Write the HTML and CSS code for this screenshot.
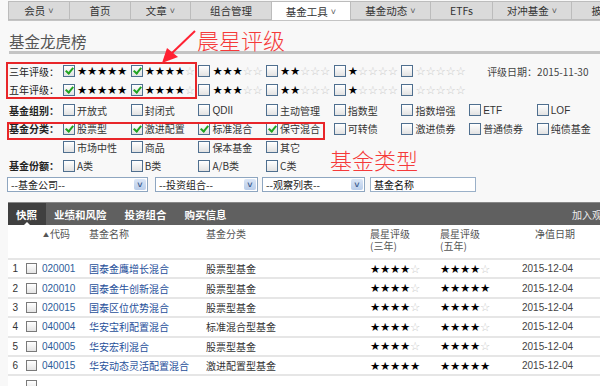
FILE: index.html
```html
<!DOCTYPE html>
<html lang="zh-CN">
<head>
    <meta charset="UTF-8">
    <title>基金龙虎榜</title>
    <link rel="stylesheet" href="styles.css">
</head>
<body>
    <div class="nav">
        <div class="nav-item w60">会员 <span class="chev">˅</span></div>
        <div class="nav-item w60">首页</div>
        <div class="nav-item w59">文章 <span class="chev">˅</span></div>
        <div class="nav-item w80">组合管理</div>
        <div class="nav-item w78 active">基金工具 <span class="chev">˅</span></div>
        <div class="nav-item w79">基金动态 <span class="chev">˅</span></div>
        <div class="nav-item w61">ETFs</div>
        <div class="nav-item w78">对冲基金 <span class="chev">˅</span></div>
        <div class="nav-item w60">披露</div>
    </div>

    <div class="title">基金龙虎榜</div>

    <div class="filters">
        <div class="frow">
            <span class="flabel">三年评级：</span>
            <span class="fcell"><i class="cb on"></i><span class="st">★★★★★</span></span>
            <span class="fcell"><i class="cb on"></i><span class="st">★★★★<b>☆</b></span></span>
            <span class="fcell"><i class="cb"></i><span class="st">★★★<b>☆☆</b></span></span>
            <span class="fcell"><i class="cb"></i><span class="st">★★<b>☆☆☆</b></span></span>
            <span class="fcell"><i class="cb"></i><span class="st">★<b>☆☆☆☆</b></span></span>
            <span class="fcell"><i class="cb"></i><span class="st"><b>☆☆☆☆☆</b></span></span>
            <span class="rdate">评级日期：2015-11-30</span>
        </div>
        <div class="frow">
            <span class="flabel">五年评级：</span>
            <span class="fcell"><i class="cb on"></i><span class="st">★★★★★</span></span>
            <span class="fcell"><i class="cb on"></i><span class="st">★★★★<b>☆</b></span></span>
            <span class="fcell"><i class="cb"></i><span class="st">★★★<b>☆☆</b></span></span>
            <span class="fcell"><i class="cb"></i><span class="st">★★<b>☆☆☆</b></span></span>
            <span class="fcell"><i class="cb"></i><span class="st">★<b>☆☆☆☆</b></span></span>
            <span class="fcell"><i class="cb"></i><span class="st"><b>☆☆☆☆☆</b></span></span>
        </div>
        <div class="frow gap">
            <span class="flabel bold">基金组别：</span>
            <span class="fcell"><i class="cb"></i>开放式</span>
            <span class="fcell"><i class="cb"></i>封闭式</span>
            <span class="fcell"><i class="cb"></i><span class="lat">QDII</span></span>
            <span class="fcell"><i class="cb"></i>主动管理</span>
            <span class="fcell"><i class="cb"></i>指数型</span>
            <span class="fcell"><i class="cb"></i>指数增强</span>
            <span class="fcell"><i class="cb"></i><span class="lat">ETF</span></span>
            <span class="fcell"><i class="cb"></i><span class="lat">LOF</span></span>
        </div>
        <div class="frow">
            <span class="flabel bold">基金分类：</span>
            <span class="fcell"><i class="cb on"></i>股票型</span>
            <span class="fcell"><i class="cb on"></i>激进配置</span>
            <span class="fcell"><i class="cb on"></i>标准混合</span>
            <span class="fcell"><i class="cb on"></i>保守混合</span>
            <span class="fcell"><i class="cb"></i>可转债</span>
            <span class="fcell"><i class="cb"></i>激进债券</span>
            <span class="fcell"><i class="cb"></i>普通债券</span>
            <span class="fcell"><i class="cb"></i>纯债基金</span>
        </div>
        <div class="frow">
            <span class="flabel"></span>
            <span class="fcell"><i class="cb"></i>市场中性</span>
            <span class="fcell"><i class="cb"></i>商品</span>
            <span class="fcell"><i class="cb"></i>保本基金</span>
            <span class="fcell"><i class="cb"></i>其它</span>
        </div>
        <div class="frow">
            <span class="flabel bold">基金份额：</span>
            <span class="fcell"><i class="cb"></i>A类</span>
            <span class="fcell"><i class="cb"></i>B类</span>
            <span class="fcell"><i class="cb"></i>A/B类</span>
            <span class="fcell"><i class="cb"></i>C类</span>
        </div>
        <div class="selects">
            <div class="sel s1">--基金公司--<span class="sel-btn">˅</span></div>
            <div class="sel s2">--投资组合--<span class="sel-btn">˅</span></div>
            <div class="sel s3">--观察列表--<span class="sel-btn">˅</span></div>
            <div class="search">基金名称</div>
        </div>
    </div>

    <div class="tabs">
        <div class="tab active">快照</div>
        <div class="tab">业绩和风险</div>
        <div class="tab">投资组合</div>
        <div class="tab">购买信息</div>
        <div class="tab-right">加入观察</div>
    </div>

    <div class="table">
        <div class="thead">
            <span></span>
            <span></span>
            <span class="sort"><small>▲</small>代码</span>
            <span>基金名称</span>
            <span>基金分类</span>
            <span>晨星评级<br>(三年)</span>
            <span>晨星评级<br>(五年)</span>
            <span class="th-date">净值日期</span>
        </div>
        <div class="trow">
            <span class="num">1</span><span><i class="tcb"></i></span><a class="code">020001</a><a class="name">国泰金鹰增长混合</a><span>股票型基金</span>
            <span class="st">★★★★<b>☆</b></span><span class="st">★★★★<b>☆</b></span><span class="date">2015-12-04</span>
        </div>
        <div class="trow">
            <span class="num">2</span><span><i class="tcb"></i></span><a class="code">020010</a><a class="name">国泰金牛创新混合</a><span>股票型基金</span>
            <span class="st">★★★★<b>☆</b></span><span class="st">★★★★★</span><span class="date">2015-12-04</span>
        </div>
        <div class="trow">
            <span class="num">3</span><span><i class="tcb"></i></span><a class="code">020015</a><a class="name">国泰区位优势混合</a><span>股票型基金</span>
            <span class="st">★★★★<b>☆</b></span><span class="st">★★★★<b>☆</b></span><span class="date">2015-12-04</span>
        </div>
        <div class="trow">
            <span class="num">4</span><span><i class="tcb"></i></span><a class="code">040004</a><a class="name">华安宝利配置混合</a><span>标准混合型基金</span>
            <span class="st">★★★★<b>☆</b></span><span class="st">★★★★<b>☆</b></span><span class="date">2015-12-04</span>
        </div>
        <div class="trow">
            <span class="num">5</span><span><i class="tcb"></i></span><a class="code">040005</a><a class="name">华安宏利混合</a><span>股票型基金</span>
            <span class="st">★★★★<b>☆</b></span><span class="st">★★★★<b>☆</b></span><span class="date">2015-12-04</span>
        </div>
        <div class="trow">
            <span class="num">6</span><span><i class="tcb"></i></span><a class="code">040015</a><a class="name">华安动态灵活配置混合</a><span>激进配置型基金</span>
            <span class="st">★★★★★</span><span class="st">★★★★★</span><span class="date">2015-12-04</span>
        </div>
        <div class="trow">
            <span class="num"></span><span><i class="tcb"></i></span>
        </div>
    </div>

    <!-- annotations drawn over the screenshot -->
    <div class="note note-rating">晨星评级</div>
    <div class="note note-type">基金类型</div>
    <div class="redbox box-rating"></div>
    <div class="redbox box-type"></div>
    <svg class="arrow" width="40" height="40" viewBox="0 0 40 40">
        <line x1="37" y1="2" x2="14" y2="24" stroke="#f23" stroke-width="2"/>
        <polygon points="4,34 9,19 20,28" fill="#f23"/>
    </svg>
</body>
</html>
```

FILE: styles.css
```css
body {
    margin: 0;
    background: #f8f8f8;
    font-family: "Noto Sans CJK SC", "Liberation Sans", sans-serif;
    font-size: 10px;
    color: #333;
    position: relative;
    overflow: hidden;
    height: 386px;
}

/* top navigation */
.nav {
    display: flex;
    margin: 1px 0 0 8px;
    height: 19px;
    border-bottom: 1px solid #c4c4c4;
    white-space: nowrap;
    overflow: hidden;
}
.nav-item {
    display: flex;
    align-items: center;
    justify-content: center;
    flex-shrink: 0;
    background: #dadada;
    border: 1px solid #bcbcbc;
    border-left: none;
    font-size: 10.5px;
    color: #333;
}
.nav-item:first-child {
    border-left: 1px solid #bcbcbc;
}
.nav-item.active {
    background: #fff;
    height: 19px;
    border-bottom: none;
    position: relative;
    z-index: 1;
}
.chev {
    font-size: 9px;
    margin-left: 3px;
    color: #555;
}
.w59 { width: 59px; }
.w60 { width: 60px; }
.w61 { width: 61px; }
.w78 { width: 78px; }
.w79 { width: 79px; }
.w80 { width: 80px; }

.title {
    margin-left: 9px;
    padding-top: 10px;
    font-size: 15.5px;
    line-height: 20px;
    color: #555;
    border-bottom: 3px solid #c4c4c4;
}

/* filters */
.filters {
    margin: 8px 0 0 9px;
}
.frow {
    display: flex;
    align-items: center;
    height: 18.5px;
    white-space: nowrap;
}
.frow.gap {
    margin-top: 2px;
}
.flabel {
    width: 54px;
    flex-shrink: 0;
    color: #222;
}
.flabel.bold {
    font-weight: bold;
}
.fcell {
    width: 67.7px;
    flex-shrink: 0;
    display: flex;
    align-items: center;
    color: #333;
}
.lat {
    font-family: "Liberation Sans", sans-serif;
}
.rdate {
    margin-left: 18px;
    color: #444;
    font-size: 10px;
}
.cb {
    position: relative;
    display: inline-block;
    width: 10px;
    height: 10px;
    border: 1px solid #4f6f8f;
    background: linear-gradient(#fff, #e2e2e2);
    margin-right: 2px;
    flex-shrink: 0;
}
.cb.on::after {
    content: "";
    position: absolute;
    left: 3px;
    top: 0;
    width: 3px;
    height: 6px;
    border: solid #21a321;
    border-width: 0 2px 2px 0;
    transform: rotate(40deg);
}
.st {
    font-family: "DejaVu Sans", sans-serif;
    font-size: 11.5px;
    color: #000;
    letter-spacing: -0.3px;
}
.st b {
    font-weight: normal;
    color: #c8c8c8;
}

.selects {
    display: flex;
    margin: 2px 0 0 -2px;
    height: 15px;
    gap: 5px;
}
.sel {
    position: relative;
    height: 13px;
    border: 1px solid #8ea6c0;
    background: #fff;
    line-height: 13px;
    padding-left: 3px;
    color: #222;
}
.s1 { width: 136px; margin-right: 2px; }
.s2 { width: 98px; margin-right: -1px; }
.s3 { width: 98px; }
.sel-btn {
    position: absolute;
    right: 1px;
    top: 1px;
    width: 12px;
    height: 11px;
    background: linear-gradient(#dbe6f6, #b9cdea);
    border-radius: 2px;
    color: #3a5a8c;
    font-size: 9px;
    line-height: 11px;
    text-align: center;
    font-weight: bold;
}
.search {
    width: 101px;
    height: 13px;
    border: 1px solid #9ab0c8;
    background: #fff;
    line-height: 13px;
    padding-left: 3px;
    color: #111;
}

/* tab bar */
.tabs {
    display: flex;
    align-items: center;
    margin: 10px 0 0 8px;
    height: 23px;
    background: #606060;
    border-top: 1px solid #888;
    box-sizing: border-box;
    white-space: nowrap;
    overflow: hidden;
}
.tab {
    position: relative;
    height: 100%;
    display: flex;
    align-items: center;
    padding: 0 8px;
    color: #fff;
    font-weight: bold;
    font-size: 10.5px;
    margin-right: 2px;
}
.tab.active {
    background: #404040;
    padding: 0 9px 0 8px;
    margin-right: 0;
}
.tab.active::after {
    content: "";
    position: absolute;
    left: 16px;
    bottom: 0;
    border: 3px solid transparent;
    border-bottom-color: #fff;
}
.tab-right {
    margin-left: auto;
    margin-right: -12px;
    color: #eee;
    font-size: 10px;
}

/* table */
.table {
    margin-left: 8px;
    background: #fff;
}
.thead, .trow {
    display: grid;
    grid-template-columns: 16px 18px 47px 117px 164px 70px 82px 1fr;
    white-space: nowrap;
}
.thead {
    height: 35px;
    padding-top: 3px;
    box-sizing: border-box;
    line-height: 12px;
    color: #555;
    border-bottom: 2px solid #e6e6e6;
}
.thead .sort {
    margin-left: 1px;
}
.thead small {
    font-size: 6px;
    margin-right: 1px;
    vertical-align: 1px;
}
.th-date {
    padding-left: 13px;
}
.trow {
    height: 19.4px;
    align-items: center;
    border-bottom: 2px solid #e6e6e6;
    box-sizing: border-box;
}
.num {
    text-align: right;
    padding-right: 6px;
    font-family: "Liberation Sans", sans-serif;
    color: #333;
}
.tcb {
    display: block;
    width: 9px;
    height: 9px;
    margin-left: 2px;
    border: 1px solid #7a7a7a;
    background: linear-gradient(#fff, #e4e4e4);
}
.code {
    font-family: "Liberation Sans", sans-serif;
    color: #2d5d9a;
}
.name {
    color: #1f4f9a;
}
.date {
    font-family: "Liberation Sans", sans-serif;
    color: #444;
}

/* red annotations */
.note {
    position: absolute;
    color: #f53a3a;
    font-size: 22px;
    line-height: 24px;
    font-weight: 300;
}
.note-rating {
    left: 197px;
    top: 27px;
}
.note-type {
    left: 330px;
    top: 147px;
}
.redbox {
    position: absolute;
    border: 2px solid #e8262a;
    box-sizing: border-box;
}
.box-rating {
    left: 6px;
    top: 62px;
    width: 191px;
    height: 37px;
}
.box-type {
    left: 7px;
    top: 122px;
    width: 318px;
    height: 18px;
}
.arrow {
    position: absolute;
    left: 158px;
    top: 29px;
}
```
